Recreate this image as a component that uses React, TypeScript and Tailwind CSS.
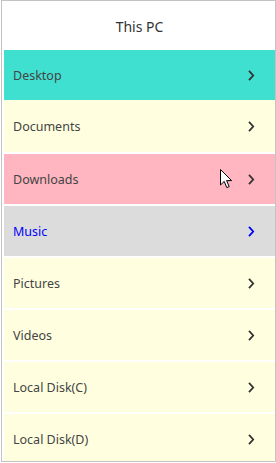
const items = [
  { label: 'Desktop', bg: 'bg-[#40e0d0]', text: 'text-[#444444]', box: 'h-[50px]' },
  { label: 'Documents', bg: 'bg-[#ffffe0]', text: 'text-[#444444]', box: 'h-[52px]' },
  { label: 'Downloads', bg: 'bg-[#ffb6c1]', text: 'text-[#444444]', box: 'mt-[2px] h-[50px]', hover: true },
  { label: 'Music', bg: 'bg-[#dcdcdc]', text: 'text-[#0000ff]', box: 'mt-[2px] h-[50px]' },
  { label: 'Pictures', bg: 'bg-[#ffffe0]', text: 'text-[#444444]', box: 'mt-[2px] h-[50px]' },
  { label: 'Videos', bg: 'bg-[#ffffe0]', text: 'text-[#444444]', box: 'mt-[2px] h-[50px]' },
  { label: 'Local Disk(C)', bg: 'bg-[#ffffe0]', text: 'text-[#444444]', box: 'mt-[2px] h-[50px]' },
  { label: 'Local Disk(D)', bg: 'bg-[#ffffe0]', text: 'text-[#444444]', box: 'mt-[2px] h-[50px]' },
]

function Chevron() {
  return (
    <svg width="7" height="11" viewBox="0 0 7 11" className="shrink-0">
      <path d="M1 0.8 L5.2 5.5 L1 10.2" fill="none" stroke="currentColor" strokeWidth="1.8" />
    </svg>
  )
}

function Cursor() {
  return (
    <svg width="13" height="20" viewBox="0 0 13 20" className="absolute left-[216px] top-[15px]">
      <path
        d="M0.5 0.5 L0.5 16 L4.2 12.4 L6.8 18.6 L9.2 17.6 L6.6 11.6 L11.6 11.6 Z"
        fill="#ffffff"
        stroke="#000000"
        strokeWidth="1"
      />
    </svg>
  )
}

export default function App() {
  return (
    <div
      className="ml-[1px] h-[462px] w-[275px] overflow-hidden border border-[#c3c3c3] bg-white pl-[2px]"
      style={{ fontFamily: '"Noto Sans", "Open Sans", sans-serif' }}
    >
      <div className="flex h-[49px] items-center justify-center pt-[1px] text-[14px] text-[#333333]">This PC</div>
      <div className="flex flex-col">
        {items.map((item) => (
          <div
            key={item.label}
            className={`relative flex shrink-0 items-center justify-between pl-[9px] pr-[20px] text-[12.5px] ${item.box} ${item.bg} ${item.text}`}
          >
            <span className="pt-[2px]">{item.label}</span>
            <span className={item.label === 'Music' ? 'text-[#0000ff]' : 'text-[#333333]'}>
              <Chevron />
            </span>
            {item.hover ? <Cursor /> : null}
          </div>
        ))}
      </div>
    </div>
  )
}
